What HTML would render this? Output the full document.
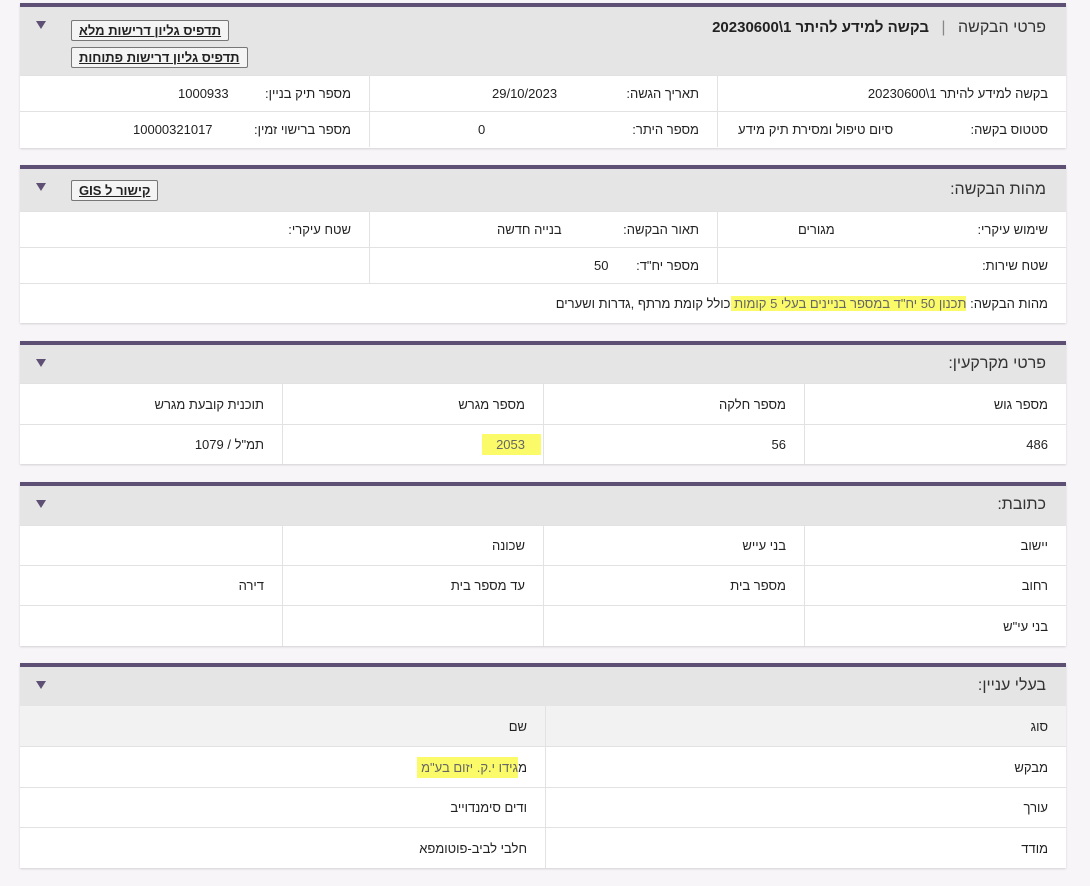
<!DOCTYPE html>
<html lang="he" dir="rtl"><head><meta charset="utf-8"><style>
*{box-sizing:border-box;margin:0;padding:0}
body{width:1090px;height:886px;background:#f7f5f7;font-family:"Liberation Sans","DejaVu Sans",sans-serif;color:#222;font-size:13px;position:relative;overflow:hidden}
.p{position:absolute;left:20px;width:1046px;background:#fff;border-top:4px solid #5e5075;box-shadow:0 1px 2px rgba(0,0,0,.15)}
.h{background:#e5e5e5;position:relative;font-size:16px;color:#333}
.h .t{position:absolute;right:20px;top:12px}
.tri{position:absolute;left:16px;top:14px;width:0;height:0;border-left:5px solid transparent;border-right:5px solid transparent;border-top:8px solid #5e5075}
.btn{position:absolute;left:51px;border:1px solid #777;background:#f4f4f4;font-size:13px;font-weight:bold;text-decoration:underline;padding:2px 7px;color:#222;border-radius:2px}
.row{display:flex;border-top:1px solid #e2e2e2;position:relative}
.c{border-left:1px solid #e2e2e2;position:relative;padding-right:18px;display:flex;align-items:center}
.c:last-child{border-left:none}
.v{position:absolute}
mark{background:#fbfb6a;color:#666}
</style></head><body>

<div class="p" style="top:3px;height:145px">
 <div class="h" style="height:68px">
  <div class="t" style="top:12px">פרטי הבקשה <span style="color:#888;margin:0 8px">|</span> <b style="font-size:15px;color:#222">בקשה למידע להיתר 1\20230600</b></div>
  <div class="tri"></div>
  <div class="btn" style="top:13px">תדפיס גליון דרישות מלא</div>
  <div class="btn" style="top:40px">תדפיס גליון דרישות פתוחות</div>
 </div>
 <div class="row" style="height:36px">
  <div class="c" style="width:349px">בקשה למידע להיתר 1\20230600</div>
  <div class="c" style="width:348px">תאריך הגשה:<span class="v" style="left:122px">29/10/2023</span></div>
  <div class="c" style="width:349px">מספר תיק בניין:<span class="v" style="left:158px">1000933</span></div>
 </div>
 <div class="row" style="height:36px">
  <div class="c" style="width:349px">סטטוס בקשה:<span class="v" style="left:20px">סיום טיפול ומסירת תיק מידע</span></div>
  <div class="c" style="width:348px">מספר היתר:<span class="v" style="left:108px">0</span></div>
  <div class="c" style="width:349px">מספר ברישוי זמין:<span class="v" style="left:113px">10000321017</span></div>
 </div>
</div>

<div class="p" style="top:165px;height:158px">
 <div class="h" style="height:42px">
  <div class="t">מהות הבקשה:</div>
  <div class="tri"></div>
  <div class="btn" style="top:11px">קישור ל GIS</div>
 </div>
 <div class="row" style="height:36px">
  <div class="c" style="width:349px">שימוש עיקרי:<span class="v" style="left:80px">מגורים</span></div>
  <div class="c" style="width:348px">תאור הבקשה:<span class="v" style="left:127px">בנייה חדשה</span></div>
  <div class="c" style="width:349px">שטח עיקרי:</div>
 </div>
 <div class="row" style="height:36px">
  <div class="c" style="width:349px">שטח שירות:</div>
  <div class="c" style="width:348px">מספר יח"ד:<span class="v" style="left:224px">50</span></div>
  <div class="c" style="width:349px"></div>
 </div>
 <div class="row" style="height:39px">
  <div class="c" style="width:1046px">מהות הבקשה:&nbsp;<mark>תכנון 50 יח"ד במספר בניינים בעלי 5 קומות&nbsp;</mark>כולל קומת מרתף ,גדרות ושערים</div>
 </div>
</div>

<div class="p" style="top:341px;height:123px">
 <div class="h" style="height:38px"><div class="t" style="top:10px">פרטי מקרקעין:</div><div class="tri" style="top:14px"></div></div>
 <div class="row" style="height:41px">
  <div class="c" style="width:262px">מספר גוש</div><div class="c" style="width:261px">מספר חלקה</div><div class="c" style="width:261px">מספר מגרש</div><div class="c" style="width:262px">תוכנית קובעת מגרש</div>
 </div>
 <div class="row" style="height:40px">
  <div class="c" style="width:262px">486</div><div class="c" style="width:261px">56</div><div class="c" style="width:261px;padding-right:2px"><mark style="padding:3px 16px 3px 14px">2053</mark></div><div class="c" style="width:262px">תמ"ל / 1079</div>
 </div>
</div>

<div class="p" style="top:482px;height:164px">
 <div class="h" style="height:39px"><div class="t" style="top:10px">כתובת:</div><div class="tri" style="top:14px"></div></div>
 <div class="row" style="height:40px">
  <div class="c" style="width:262px">יישוב</div><div class="c" style="width:261px">בני עייש</div><div class="c" style="width:261px">שכונה</div><div class="c" style="width:262px"></div>
 </div>
 <div class="row" style="height:40px">
  <div class="c" style="width:262px">רחוב</div><div class="c" style="width:261px">מספר בית</div><div class="c" style="width:261px">עד מספר בית</div><div class="c" style="width:262px">דירה</div>
 </div>
 <div class="row" style="height:41px">
  <div class="c" style="width:262px">בני עי"ש</div><div class="c" style="width:261px"></div><div class="c" style="width:261px"></div><div class="c" style="width:262px"></div>
 </div>
</div>

<div class="p" style="top:663px;height:205px">
 <div class="h" style="height:39px"><div class="t" style="top:10px">בעלי עניין:</div><div class="tri" style="top:14px"></div></div>
 <div class="row" style="height:40px;background:#f2f2f2;border-top:none">
  <div class="c" style="width:521px">סוג</div><div class="c" style="width:525px">שם</div>
 </div>
 <div class="row" style="height:41px">
  <div class="c" style="width:521px">מבקש</div><div class="c" style="width:525px">מ<mark style="padding:3px 0 3px 4px">גידו י.ק. יזום בע"מ</mark></div>
 </div>
 <div class="row" style="height:40px">
  <div class="c" style="width:521px">עורך</div><div class="c" style="width:525px">ודים סימנדוייב</div>
 </div>
 <div class="row" style="height:41px">
  <div class="c" style="width:521px">מודד</div><div class="c" style="width:525px">חלבי לביב-פוטומפא</div>
 </div>
</div>

</body></html>
